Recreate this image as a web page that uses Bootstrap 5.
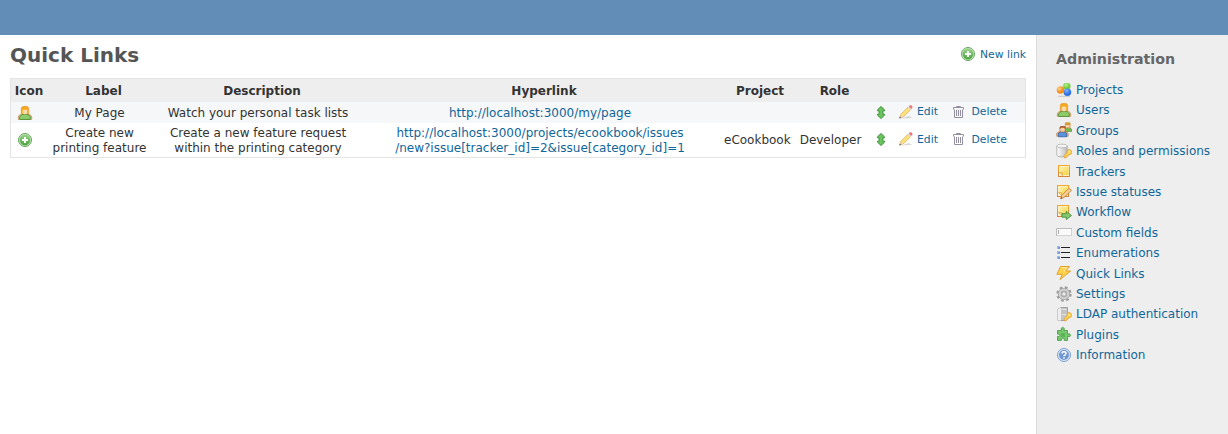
<!DOCTYPE html>
<html lang="en">
<head>
<meta charset="utf-8">
<title>Quick Links</title>
<link href="https://cdn.jsdelivr.net/npm/bootstrap@5.3.0/dist/css/bootstrap.min.css" rel="stylesheet">
<style>
body{font:12px/15px "DejaVu Sans",sans-serif;color:#333;background:#fff}
a{color:#169;text-decoration:none}
.topbar{height:35px;background:#628db6}
.pane{padding:8px 10px 0}
.side{width:192px;background:#eee;border-left:1px solid #ddd;padding:16px 0 0 19px}
h2{font-size:20px;line-height:24px;font-weight:700;color:#555;margin:0}
h3{font-size:14.2px;line-height:17px;font-weight:700;color:#666;margin:0 0 12.3px}
.contextual,.acts{font-size:10.8px}
.contextual{margin-top:-2px}
.links{table-layout:fixed;width:1016px;border:1px solid #e4e4e4;border-collapse:separate;border-spacing:0;margin-top:11px;text-align:center}
.links th{background:#eee;height:23px;padding:1px 0 0;white-space:nowrap;font-weight:700;text-align:center}
.links td{padding:0 8px 0 0;vertical-align:middle;white-space:nowrap}
.links .one td{height:21px;padding-top:1px;background:#f6f7f8}
.links .two td{height:34px}
.links .two .lines{padding-top:2px}
.links .acts,.links .one .acts{padding:0 0 2px}
.acts a{gap:3px}
.acts .ms-2{margin-left:9px!important}
.acts .del{gap:4px;margin-left:13.5px}
.menu-item{height:20.4px;gap:4px;white-space:nowrap}
.menu-item svg{margin-top:-1.8px}
svg{display:block;flex:none}
</style>
</head>
<body>
<svg width="0" height="0" class="position-absolute">
<defs>
<linearGradient id="gg" x1="0" y1="0" x2="0" y2="1"><stop offset="0" stop-color="#9bd38a"/><stop offset="1" stop-color="#4aa33d"/></linearGradient>
<linearGradient id="yy" x1="0" y1="0" x2="1" y2="1"><stop offset="0" stop-color="#fff3b0"/><stop offset="1" stop-color="#f3cf3e"/></linearGradient>
<linearGradient id="oo" x1="0" y1="0" x2="0" y2="1"><stop offset="0" stop-color="#f4a92c"/><stop offset="1" stop-color="#d9823b"/></linearGradient>
<linearGradient id="cy" x1="0" y1="0" x2="1" y2="0"><stop offset="0" stop-color="#fff"/><stop offset="1" stop-color="#bbb"/></linearGradient>
<radialGradient id="bo" cx=".35" cy=".3"><stop offset="0" stop-color="#ffd28c"/><stop offset="1" stop-color="#f58c1c"/></radialGradient>
<radialGradient id="bg" cx=".4" cy=".3"><stop offset="0" stop-color="#b9f08c"/><stop offset="1" stop-color="#6ecb37"/></radialGradient>
<radialGradient id="bb" cx=".4" cy=".3"><stop offset="0" stop-color="#86b7ff"/><stop offset="1" stop-color="#2f70e0"/></radialGradient>
<symbol id="add" viewBox="0 0 16 16"><circle cx="8" cy="8" r="6.5" fill="#cfe8c8" stroke="#64a65c" stroke-width="1"/><circle cx="8" cy="8" r="5.4" fill="url(#gg)"/><path d="M8 5v6M5 8h6" stroke="#fff" stroke-width="2"/></symbol>
<symbol id="user" viewBox="0 0 16 16"><path d="M1.300 14.400V12q.2-2 2.700-2.600h8q2.500.6 2.700 2.600v2.400z" fill="#f1cc98" stroke="#bb874a" stroke-width=".7"/><path d="M2.900 14.500q-1-1.500 0-3 1-2.500 5.100-2.500t5.100 2.500q1 1.500 0 3z" fill="#8bcb69" stroke="#478a31" stroke-width=".8"/><path d="M4.300 8.800V3.500q0-2.200 3.700-2.200t3.700 2.200v5.300z" fill="#f7a91c" stroke="#dd9024" stroke-width=".6"/><path d="M5.800 4.800h4.400v3.400Q8 10.500 5.800 8.200z" fill="#fbdcae"/></symbol>
<symbol id="projects" viewBox="0 0 16 16"><path d="M2 13.800h12v1H2z" fill="#aaa" opacity=".6"/><rect x="7.300" y="1.300" width="7" height="6" rx="2.300" fill="url(#bg)" stroke="#84ce60" stroke-width=".4"/><circle cx="4.400" cy="8" r="3.700" fill="url(#bo)"/><circle cx="11.400" cy="10.200" r="3.800" fill="url(#bb)"/></symbol>
<symbol id="groups" viewBox="0 0 16 16"><path d="M8 8.500V6.500l2-1h3.500l2 1.500v2.500H9z" fill="#75b951" stroke="#498a34" stroke-width=".6"/><rect x="9.300" y=".9" width="4.700" height="5" rx="1" fill="#f6d0a0" stroke="#cf8830" stroke-width=".7"/><path d="M9 3V.6h5.300V3z" fill="#d79a36"/><path d="M.7 14.300v-3l2-1.500h7.500l2 1.500v3z" fill="#e7ac76" stroke="#b47447" stroke-width=".6"/><path d="M2.500 14.800v-3.600L4.500 9.700h4l2 1.500v3.600z" fill="#5793de" stroke="#2a5fa8" stroke-width=".7"/><rect x="4" y="4.500" width="5.200" height="5.500" rx="1.500" fill="#f6cfa3" stroke="#a36137" stroke-width=".7"/><path d="M3.700 7V5.300Q4 3.900 6.600 3.900T9.500 5.300V7L8 5.800H5z" fill="#a4592b"/></symbol>
<symbol id="key" viewBox="0 0 16 16"><path d="M8.500 14.900l-.3-2.500 2.700-2.700q-.3-3 2-3.200 2.600 0 2.900 2.900-.3 2.400-3 2.300l-.8 1.200h-1v1l-1 1z" fill="#fbcf4f" stroke="#d99a35" stroke-width=".7"/><circle cx="13.400" cy="8.800" r=".8" fill="#fff"/></symbol>
<symbol id="roles" viewBox="0 0 16 16"><path d="M.8 3v9q0 2 5.200 2t5.200-2V3z" fill="url(#cy)" stroke="#a5a5a5" stroke-width=".8"/><ellipse cx="6" cy="3" rx="5.200" ry="1.900" fill="#f4f4f4" stroke="#b1b1b1" stroke-width=".8"/><use href="#key" width="16" height="16"/></symbol>
<symbol id="note" viewBox="0 0 16 16"><rect x="2.500" y="2.500" width="11" height="11" fill="#fff1bd" stroke="url(#oo)"/><rect x="4" y="4" width="8.500" height="8" fill="url(#yy)"/><path d="M3 9.500l3.500-1V13H3z" fill="#fff7d8"/><path d="M3.500 9.500h3v3.200z" fill="#f9dc83" stroke="#dfa137" stroke-width=".7"/></symbol>
<symbol id="statuses" viewBox="0 0 16 16"><use href="#note" width="16" height="16" x="-1" y="-1"/><path d="M4.700 14.700l1-3.200 6.800-6.800q2-.3 3 1.700L8.200 13.300z" fill="#f6d093" stroke="#bb7832" stroke-width=".8"/><path d="M4.500 15l.7-1.900 1.300 1.200z" fill="#6b5335"/></symbol>
<symbol id="workflow" viewBox="0 0 16 16"><use href="#note" width="16" height="16" x="-1" y="-1"/><path d="M6 9.700h4.300V7.400l5.200 4.100-5.200 4v-2.300H6z" fill="#85c870" stroke="#438f38" stroke-width=".9"/></symbol>
<symbol id="fields" viewBox="0 0 16 16"><rect x=".5" y="4.500" width="15" height="7" fill="#fafafa" stroke="#d4d4d4"/><path d="M0 4.500h16M.5 4v8" stroke="#bcbcbc"/><path d="M2.500 6v4" stroke="#aaa"/></symbol>
<symbol id="enums" viewBox="0 0 16 16"><path d="M1 1h3v3H1zm0 5h3v3H1zm0 5h3v3H1z" fill="#9bb9ee"/><path d="M2 2h2v2H2zm0 5h2v2H2zm0 5h2v2H2z" fill="#7599dc"/><path d="M5 2.500h9M5 7.500h9M5 12.500h9" stroke="#222"/></symbol>
<symbol id="bolt" viewBox="0 0 16 16"><path d="M4.500 1.500h9L9.800 6h4.800L4 14.600 6.400 9.300H.9z" fill="#fcd24a" stroke="#e1a126"/><path d="M5.200 2.700h6L7.600 7" fill="none" stroke="#ffeaa0"/></symbol>
<symbol id="gear" viewBox="0 0 16 16"><circle cx="8" cy="8" r="6.500" fill="none" stroke="#9c9c9c" stroke-width="2.400" stroke-dasharray="2.700 2.405"/><circle cx="8" cy="8" r="4.300" fill="none" stroke="#a0a0a0" stroke-width="3.600"/><circle cx="8" cy="8" r="4.300" fill="none" stroke="#d0d0d0" stroke-width="2.300"/><circle cx="8" cy="8" r="2.200" fill="#eee" stroke="#909090" stroke-width=".8"/></symbol>
<symbol id="ldap" viewBox="0 0 16 16"><path d="M2 3l3-1.500h6.500V13L9.500 14.500H2z" fill="#c6c6c6" stroke="#929292" stroke-width=".8"/><path d="M2 3l3-1.500v13H2z" fill="#eee"/><path d="M6 4h4.500M6 6h4.500M6 8h4.500" stroke="#fff"/><path d="M6 5h4.500M6 7h4.500" stroke="#888" stroke-width=".7"/><use href="#key" width="16" height="16"/></symbol>
<symbol id="plugin" viewBox="0 0 16 16"><path d="M1.500 4.500h4q-1.200-3 1.200-3t1.300 3h3.500v3.700q3-1.200 3 1t-3 1.300v3.900H8.200q.7-2.300-1.300-2.300t-1.400 2.300h-4v-4q2.300.8 2.300-1t-2.300-1.300z" fill="#78c96d" stroke="#49a24b" stroke-width=".9"/><path d="M5 7h4v4H5z" fill="#5bb457"/></symbol>
<symbol id="info" viewBox="0 0 16 16"><circle cx="8" cy="8" r="6.500" fill="#dce8fa" stroke="#7c9fce"/><circle cx="8" cy="8" r="5" fill="#6f98d0"/><path d="M6 6.500Q6 4.800 8 4.800t2 1.600Q10 7.500 8 8.700v.6M8 10.300v1.500" fill="none" stroke="#fff" stroke-width="1.400"/></symbol>
<symbol id="updown" viewBox="0 0 16 16"><path d="M8 2.500l3.500 3.300v1H9.900v3.400h1.600v1L8 14.500l-3.500-3.300v-1h1.600V6.800H4.500v-1z" fill="#6cc45e" stroke="#3d913d" stroke-width="1" stroke-linejoin="round"/></symbol>
<symbol id="edit" viewBox="0 0 16 16"><path d="M3 14.500q6-.8 11-.5l-3-2z" fill="#bbb" opacity=".6"/><path d="M1.700 14l1.200-3.700 7.300-7.300 2.500 2.500-7.300 7.300z" fill="#fbe27a" stroke="#d6a64c" stroke-width=".7"/><path d="M1.700 14l1.200-3.700 2.500 2.500z" fill="#f2d6b1"/><path d="M1.300 14.400l.6-1.800 1.300 1.200z" fill="#555"/><path d="M9.600 3.500l1-1 2.600 2.600-1 1z" fill="#d4dde6"/><path d="M10.700 2.400l1-1.100h1.700l1 1v1.600l-1.200 1.200z" fill="#f07878"/></symbol>
<symbol id="trash" viewBox="0 0 16 16"><path d="M2.500 5.500v-2h10v2M5.500 3.500v-1h4v1M3.500 5.500v8h8v-8M5.500 6v6M7.500 6v6M9.500 6v6" fill="none" stroke="#9391a1"/></symbol>
</defs>
</svg>
<div class="d-flex flex-column vh-100">
<header class="topbar flex-shrink-0"></header>
<div class="d-flex flex-grow-1">
<main class="pane flex-grow-1">
<div class="d-flex justify-content-between align-items-center"><h2>Quick Links</h2><a href="#" class="contextual d-flex align-items-center"><svg width="16" height="16" class="me-1"><use href="#add"/></svg>New link</a></div>
<table class="links">
<colgroup><col style="width:36px"><col style="width:113px"><col style="width:204px"><col style="width:360px"><col style="width:72px"><col style="width:77px"><col></colgroup>
<thead><tr><th>Icon</th><th>Label</th><th>Description</th><th>Hyperlink</th><th>Project</th><th>Role</th><th></th></tr></thead>
<tbody>
<tr class="one"><td><svg width="16" height="16" class="mx-auto"><use href="#user"/></svg></td><td>My Page</td><td>Watch your personal task lists</td><td><a href="#">http://localhost:3000/my/page</a></td><td></td><td></td>
<td class="acts"><div class="d-flex align-items-center"><svg width="16" height="16"><use href="#updown"/></svg><a href="#" class="d-flex align-items-center ms-2"><svg width="16" height="16"><use href="#edit"/></svg>Edit</a><a href="#" class="d-flex align-items-center del"><svg width="16" height="16"><use href="#trash"/></svg>Delete</a></div></td></tr>
<tr class="two"><td><svg width="16" height="16" class="mx-auto"><use href="#add"/></svg></td><td class="lines">Create new<br>printing feature</td><td class="lines">Create a new feature request<br>within the printing category</td><td class="lines"><a href="#">http://localhost:3000/projects/ecookbook/issues<br>/new?issue[tracker_id]=2&amp;issue[category_id]=1</a></td><td>eCookbook</td><td>Developer</td>
<td class="acts"><div class="d-flex align-items-center"><svg width="16" height="16"><use href="#updown"/></svg><a href="#" class="d-flex align-items-center ms-2"><svg width="16" height="16"><use href="#edit"/></svg>Edit</a><a href="#" class="d-flex align-items-center del"><svg width="16" height="16"><use href="#trash"/></svg>Delete</a></div></td></tr>
</tbody>
</table>
</main>
<aside class="side flex-shrink-0">
<h3>Administration</h3>
<nav>
<a href="#" class="menu-item d-flex align-items-center"><svg width="16" height="16"><use href="#projects"/></svg>Projects</a>
<a href="#" class="menu-item d-flex align-items-center"><svg width="16" height="16"><use href="#user"/></svg>Users</a>
<a href="#" class="menu-item d-flex align-items-center"><svg width="16" height="16"><use href="#groups"/></svg>Groups</a>
<a href="#" class="menu-item d-flex align-items-center"><svg width="16" height="16"><use href="#roles"/></svg>Roles and permissions</a>
<a href="#" class="menu-item d-flex align-items-center"><svg width="16" height="16"><use href="#note"/></svg>Trackers</a>
<a href="#" class="menu-item d-flex align-items-center"><svg width="16" height="16"><use href="#statuses"/></svg>Issue statuses</a>
<a href="#" class="menu-item d-flex align-items-center"><svg width="16" height="16"><use href="#workflow"/></svg>Workflow</a>
<a href="#" class="menu-item d-flex align-items-center"><svg width="16" height="16"><use href="#fields"/></svg>Custom fields</a>
<a href="#" class="menu-item d-flex align-items-center"><svg width="16" height="16"><use href="#enums"/></svg>Enumerations</a>
<a href="#" class="menu-item d-flex align-items-center"><svg width="16" height="16"><use href="#bolt"/></svg>Quick Links</a>
<a href="#" class="menu-item d-flex align-items-center"><svg width="16" height="16"><use href="#gear"/></svg>Settings</a>
<a href="#" class="menu-item d-flex align-items-center"><svg width="16" height="16"><use href="#ldap"/></svg>LDAP authentication</a>
<a href="#" class="menu-item d-flex align-items-center"><svg width="16" height="16"><use href="#plugin"/></svg>Plugins</a>
<a href="#" class="menu-item d-flex align-items-center"><svg width="16" height="16"><use href="#info"/></svg>Information</a>
</nav>
</aside>
</div>
</div>
<script src="https://cdn.jsdelivr.net/npm/bootstrap@5.3.0/dist/js/bootstrap.bundle.min.js"></script>
</body>
</html>
